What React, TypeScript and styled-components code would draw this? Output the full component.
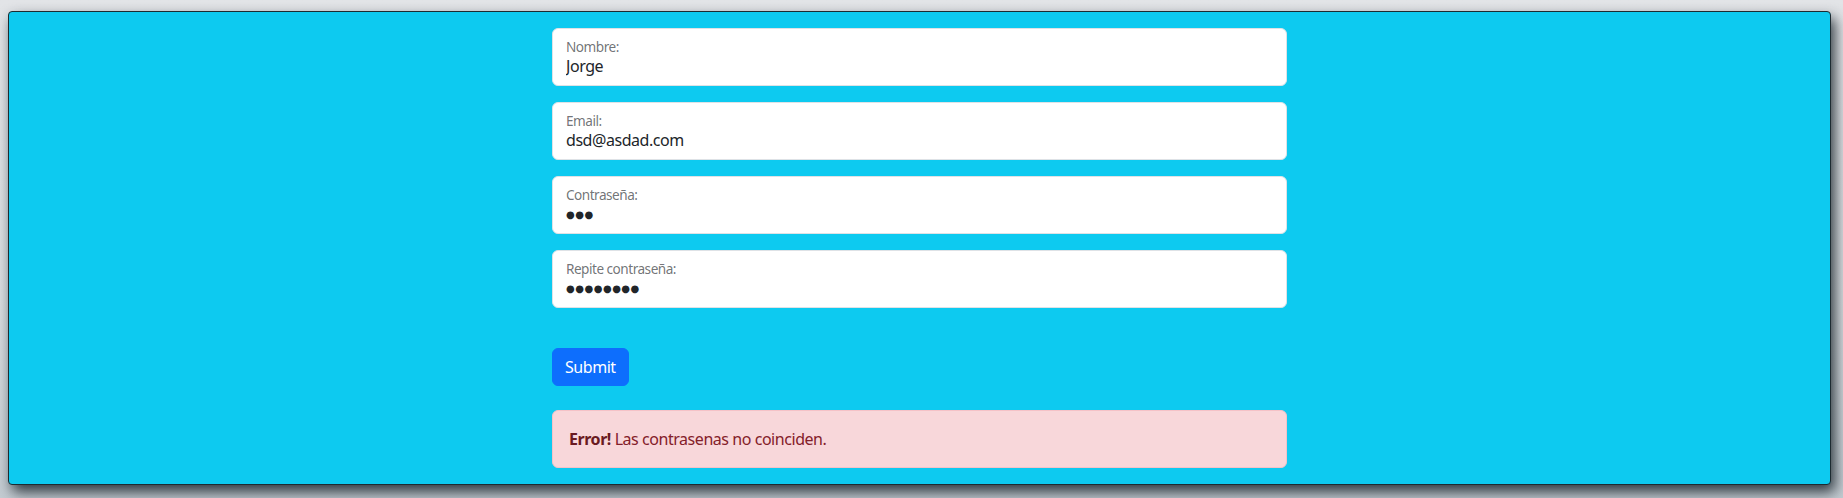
import React from 'react';
import styled, { createGlobalStyle } from 'styled-components';

const GlobalStyle = createGlobalStyle`
  html, body {
    margin: 0;
    padding: 0;
  }
  body {
    background: linear-gradient(180deg, #e2e4e7 0%, #d9dde0 60%, #c4ccd2 100%);
    font-family: "Noto Sans", "Open Sans", Arial, sans-serif;
    color: #212529;
  }
  * {
    box-sizing: border-box;
  }
`;

const Frame = styled.div`
  padding: 11px 12px 13px 8px;
  height: 498px;
`;

const Panel = styled.div`
  background-color: #0dcaf0;
  border: 1px solid #1d2b31;
  border-radius: 4px;
  padding: 16px 0 0;
  box-shadow: 4px 7px 14px rgba(30, 40, 48, 0.9);
`;

const Form = styled.form`
  width: 735px;
  margin: 0 auto;
  display: flex;
  flex-direction: column;
  letter-spacing: -0.45px;
`;

const Field = styled.label`
  display: flex;
  flex-direction: column;
  height: 58px;
  margin-bottom: 16px;
  padding: 9px 12px 7px 13px;
  background: #fff;
  border: 1px solid #dee2e6;
  border-radius: 6px;
  cursor: text;
`;

const FieldLabel = styled.span`
  font-size: 13.6px;
  line-height: 17px;
  letter-spacing: -0.5px;
  color: rgba(33, 37, 41, 0.65);
`;

const Input = styled.input<{ $secret?: boolean }>`
  border: none;
  outline: none;
  padding: 0;
  margin: 0;
  height: 23px;
  font-family: ${({ $secret }) => ($secret ? '"DejaVu Sans", sans-serif' : 'inherit')};
  font-size: ${({ $secret }) => ($secret ? '10px' : '16px')};
  line-height: 23px;
  letter-spacing: ${({ $secret }) => ($secret ? '0.5px' : '-0.45px')};
  color: #212529;
  background: transparent;
`;

const SubmitButton = styled.button`
  align-self: flex-start;
  margin-top: 24px;
  padding: 6px 12px;
  font-family: inherit;
  font-size: 16px;
  line-height: 24px;
  letter-spacing: -0.45px;
  color: #fff;
  background-color: #0d6efd;
  border: 1px solid #0d6efd;
  border-radius: 6px;
  cursor: pointer;
`;

const Alert = styled.div`
  margin: 24px 0 16px;
  padding: 16px;
  font-size: 16px;
  line-height: 24px;
  color: #842029;
  background-color: #f8d7da;
  border: 1px solid #f5c2c7;
  border-radius: 6px;

  strong {
    color: #6a1a21;
    font-weight: 700;
  }
`;

interface FieldDef {
  label: string;
  value: string;
  secret?: boolean;
}

const fields: FieldDef[] = [
  { label: 'Nombre:', value: 'Jorge' },
  { label: 'Email:', value: 'dsd@asdad.com' },
  { label: 'Contraseña:', value: '●●●', secret: true },
  { label: 'Repite contraseña:', value: '●●●●●●●●', secret: true },
];

const App: React.FC = () => {
  return (
    <>
      <GlobalStyle />
      <Frame>
        <Panel>
          <Form onSubmit={(e) => e.preventDefault()}>
            {fields.map((f) => (
              <Field key={f.label}>
                <FieldLabel>{f.label}</FieldLabel>
                <Input type="text" $secret={f.secret} defaultValue={f.value} readOnly />
              </Field>
            ))}
            <SubmitButton type="submit">Submit</SubmitButton>
            <Alert>
              <strong>Error!</strong> Las contrasenas no coinciden.
            </Alert>
          </Form>
        </Panel>
      </Frame>
    </>
  );
};

export default App;
